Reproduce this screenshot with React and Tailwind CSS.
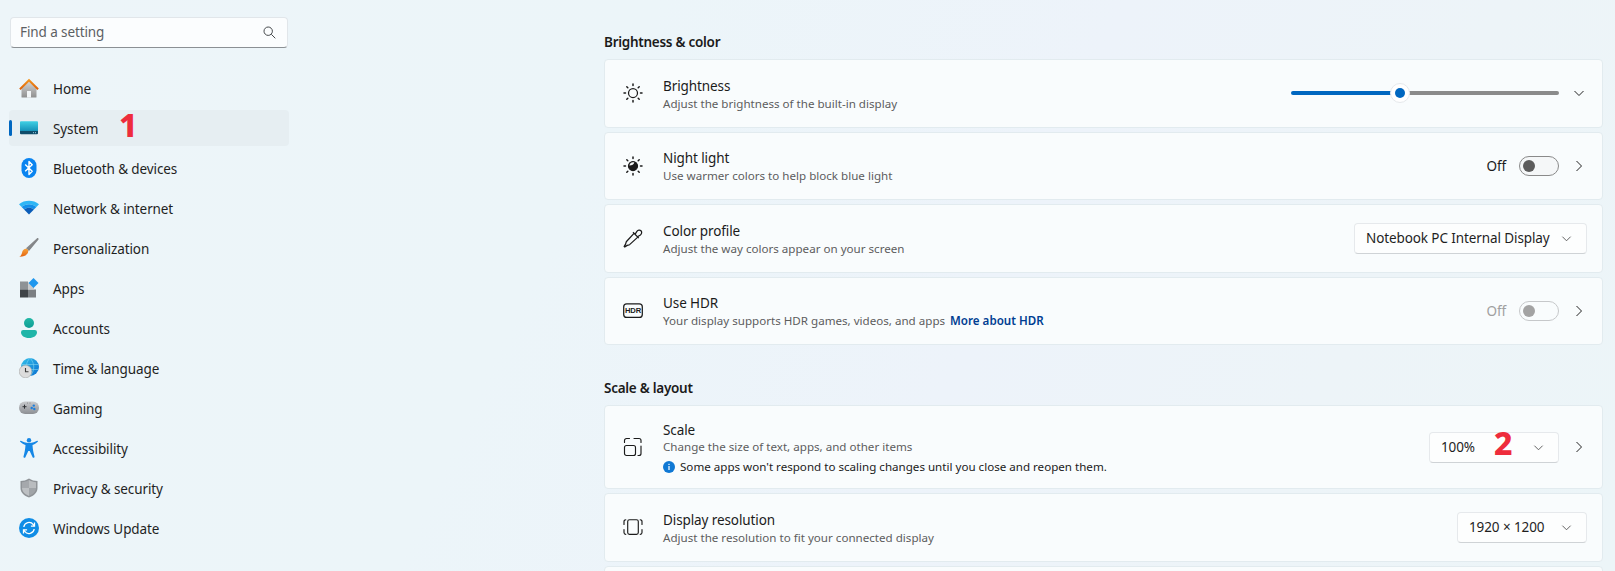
import React from "react";

const Grad = ({ id, a, b, x2 = 0, y2 = 1 }) => (
  <linearGradient id={id} x1="0" y1="0" x2={x2} y2={y2}>
    <stop offset="0" stopColor={a} />
    <stop offset="1" stopColor={b} />
  </linearGradient>
);

const HomeIcon = () => (
  <svg width="20" height="20" viewBox="0 0 20 20">
    <defs>
      <Grad id="homeBody" a="#d4d4d4" b="#8f8f8f" />
      <Grad id="homeRoof" a="#f59a22" b="#dc5f08" />
    </defs>
    <path d="M2.500 9.500 10 3.500l7.500 6V19a.6.6 0 0 1-.6.6H3.100a.6.6 0 0 1-.6-.6Z" fill="url(#homeBody)" />
    <rect x="8" y="13" width="4" height="6.600" fill="#f2f5f7" />
    <path d="M.2 10.600 10 .8l9.800 9.800-1.400 1.400L10 3.800 1.600 12Z" fill="url(#homeRoof)" />
  </svg>
);
const SystemIcon = () => (
  <svg width="20" height="20" viewBox="0 0 20 20">
    <defs>
      <Grad id="sysTop" a="#3fd0e4" b="#1591b8" />
    </defs>
    <path d="M1 4.400A1 1 0 0 1 2 3.300h16a1 1 0 0 1 1 1.100V13H1Z" fill="url(#sysTop)" />
    <path d="M1 13h18v2.200a1 1 0 0 1-1 1H2a1 1 0 0 1-1-1Z" fill="#0f4c6a" />
    <rect x="14" y="14.200" width="1" height="1" fill="#9fd3e6" />
    <rect x="16" y="14.200" width="1" height="1" fill="#9fd3e6" />
  </svg>
);
const BluetoothIcon = () => (
  <svg width="20" height="20" viewBox="0 0 20 20">
    <rect x="2.500" y="0" width="15" height="20" rx="7.500" fill="#0a84f0" />
    <path d="m6.200 6.600 7 6.600L10 16.500v-13l3.200 3.200-7 6.600" fill="none" stroke="#fff" strokeWidth="1.400" strokeLinejoin="round" />
  </svg>
);
const WifiIcon = () => (
  <svg width="20" height="20" viewBox="0 0 20 20">
    <path d="M0 6.200C5.500 1.600 14.500 1.600 20 6.200l-2.600 2.700C13 5.400 7 5.400 2.600 8.900Z" fill="#2fb6f5" />
    <path d="M2.600 8.900C7 5.400 13 5.400 17.400 8.900l-2.500 2.600C12 9.300 8 9.300 5.100 11.500Z" fill="#1390ea" />
    <path d="M5.100 11.500C8 9.300 12 9.300 14.900 11.500L10 16.400Z" fill="#0a5cb8" />
  </svg>
);
const BrushIcon = () => (
  <svg width="20" height="20" viewBox="0 0 20 20">
    <defs>
      <Grad id="brushH" a="#9a9a9a" b="#6f7378" x2={1} />
      <Grad id="brushT" a="#f7a33b" b="#e4640f" />
    </defs>
    <path d="M19.200.2c.5.4.5 1 .1 1.500L10 13l-3-2.800L17.800.4c.4-.4 1-.5 1.400-.2Z" fill="url(#brushH)" />
    <path d="M6.400 10.700c1.600-.4 3 .9 2.900 2.600-.2 3.200-4 5.700-9 5.500 2.300-1.400 2.400-3 3-5 .4-1.500 1.300-2.700 3.100-3.100Z" fill="url(#brushT)" />
  </svg>
);
const AppsIcon = () => (
  <svg width="20" height="20" viewBox="0 0 20 20">
    <rect x="1" y="3.500" width="8" height="8" fill="#8e9296" />
    <rect x="1" y="11.500" width="8" height="8" fill="#3f4347" />
    <rect x="9" y="11.500" width="8" height="8" fill="#7b7f83" />
    <rect x="9" y="4.500" width="6" height="7" fill="#c8cacc" />
    <path d="M14.500 0 19.500 5l-5 5-5-5Z" fill="#1f97ee" />
  </svg>
);
const AccountIcon = () => (
  <svg width="20" height="20" viewBox="0 0 20 20">
    <defs>
      <Grad id="acc" a="#22b8a6" b="#0f9d95" />
    </defs>
    <circle cx="10" cy="5" r="5" fill="url(#acc)" />
    <path d="M2 14.200A2.200 2.200 0 0 1 4.200 12h11.600a2.200 2.200 0 0 1 2.200 2.200c0 3.300-3.300 5.800-8 5.800s-8-2.500-8-5.800Z" fill="#1fb5a8" />
  </svg>
);
const TimeIcon = () => (
  <svg width="20" height="20" viewBox="0 0 20 20">
    <defs>
      <Grad id="globe" a="#33c1ea" b="#0a6fd0" x2={1} />
    </defs>
    <circle cx="11" cy="9" r="9" fill="url(#globe)" />
    <path d="M2.500 6.500h17M2.500 11.500h17M11 0c-5 5-5 13 0 18M11 0c5 5 5 13 0 18" stroke="#7fd5f2" strokeWidth="0.6" fill="none" />
    <circle cx="6.500" cy="13.500" r="6.300" fill="#dcdcdc" stroke="#a7a7a7" strokeWidth="0.6" />
    <path d="M6.500 10v3.800h3" fill="none" stroke="#3c3c3c" strokeWidth="1.100" />
  </svg>
);
const GamingIcon = () => (
  <svg width="20" height="20" viewBox="0 0 20 20">
    <defs>
      <Grad id="pad" a="#c8cacd" b="#8c8f94" />
    </defs>
    <rect x="0" y="3.500" width="20" height="12.500" rx="6" fill="url(#pad)" />
    <path d="M3.500 8.700h4M5.500 6.700v4" stroke="#2f3236" strokeWidth="1" />
    <circle cx="14.800" cy="7.600" r="1.200" fill="#1c7fdc" />
    <circle cx="12.700" cy="10" r="1.200" fill="#1c7fdc" />
    <circle cx="15.300" cy="11" r="1.200" fill="#1c7fdc" />
    <circle cx="8.500" cy="5" r="0.400" fill="#444" />
    <circle cx="11" cy="5" r="0.400" fill="#444" />
  </svg>
);
const AccessIcon = () => (
  <svg width="20" height="20" viewBox="0 0 20 20">
    <circle cx="10" cy="2.200" r="2.200" fill="#1587e6" />
    <path d="M1.200 3.700c-.4-.4 0-1.200.7-.9 2 1 4.500 2.200 8.100 2.200s6.100-1.200 8.100-2.200c.7-.3 1.100.5.700.9-1.500 1.400-3.600 2.700-5.300 3.200.2 4 1 8 2 11.500.3 1.200-1.300 1.900-1.900.8L10.700 13H9.300L6.400 19.300c-.6 1.100-2.200.4-1.900-.8 1-3.500 1.800-7.500 2-11.500-1.700-.5-3.800-1.800-5.300-3.300Z" fill="#1587e6" />
  </svg>
);
const ShieldIcon = () => (
  <svg width="20" height="20" viewBox="0 0 20 20">
    <path d="M10 .5c2.500 1.700 5.500 2.500 8.500 2.500v7c0 4.500-3.500 7.700-8.500 9.500C5 17.700 1.500 14.500 1.500 10V3C4.500 3 7.500 2.200 10 .5Z" fill="#8f9397" />
    <path d="M10 2c2.200 1.400 4.700 2.100 7 2.300V10H10Z" fill="#b9bcbf" />
    <path d="M10 2C7.800 3.400 5.300 4.100 3 4.300V10h7Z" fill="#a5a8ac" />
    <path d="M3 10h7v8C6 16.300 3 13.800 3 10Z" fill="#bdc0c3" />
    <path d="M17 10h-7v8c4-1.700 7-4.200 7-8Z" fill="#a0a4a8" />
  </svg>
);
const UpdateIcon = () => (
  <svg width="20" height="20" viewBox="0 0 20 20">
    <circle cx="10" cy="10" r="10" fill="#108de6" />
    <path d="M4.800 9A5.300 5.300 0 0 1 14.300 6.600L15.300 8" fill="none" stroke="#fff" strokeWidth="1.300" />
    <path d="M15.500 4.600V8.200h-3.600" fill="none" stroke="#fff" strokeWidth="1.300" />
    <path d="M15.200 11A5.300 5.300 0 0 1 5.700 13.400L4.700 12" fill="none" stroke="#fff" strokeWidth="1.300" />
    <path d="M4.500 15.400V11.800h3.600" fill="none" stroke="#fff" strokeWidth="1.300" />
  </svg>
);

const line = { fill: "none", stroke: "#1b1b1b", strokeWidth: 1.25 };
const rays = "M10 1v1.500M10 17.500V19M1 10h1.500M17.500 10H19M3.800 3.800l1 1M15.200 15.200l1 1M3.800 16.200l1-1M15.200 4.800l1-1";

const SunIcon = () => (
  <svg width="20" height="20" viewBox="0 0 20 20" {...line}>
    <circle cx="10" cy="10" r="4.500" />
    <path d={rays} strokeLinecap="round" strokeWidth="1.500" />
  </svg>
);
const NightIcon = () => (
  <svg width="20" height="20" viewBox="0 0 20 20" {...line}>
    <circle cx="10" cy="10" r="4.500" fill="#1b1b1b" />
    <path d="M6.400 9.600A3.800 3.800 0 0 1 10 6.200c.6 0 1 .1 1.300.3-.4 1.700-2.300 3-4.900 3.100Z" fill="#f4f6f7" stroke="none" />
    <path d={rays} strokeLinecap="round" strokeWidth="1.500" />
  </svg>
);
const DropperIcon = () => (
  <svg width="20" height="20" viewBox="0 0 20 20" {...line}>
    <path d="M11 5.300 3.500 13.500c-.6.700-.5 1.500-.8 2.400L1.200 18.300l.6.600 2.400-1.500c.9-.3 1.700-.2 2.400-.8l8.200-7.500" />
    <path d="m10 4.300 5.800 5.800M12 6.300l1.900-2.900c1-1.400 3-1.700 4.100-.6s.8 3.100-.6 4.100l-2.900 1.900" />
  </svg>
);
const HdrIcon = () => (
  <svg width="20" height="20" viewBox="0 0 20 20">
    <rect x="0.700" y="2.800" width="18.600" height="13.600" rx="3" fill="none" stroke="#1b1b1b" strokeWidth="1.250" />
    <text x="10" y="12.300" textAnchor="middle" fontSize="7.600" fontWeight="700" fill="#1b1b1b" style={{ fontFamily: '"Liberation Sans", sans-serif' }}>HDR</text>
  </svg>
);
const ScaleIcon = () => (
  <svg width="20" height="20" viewBox="0 0 20 20" {...line} strokeWidth="1.150">
    <rect x="1.500" y="8.500" width="11" height="10" rx="2" />
    <path d="M1.500 5.500V3.500a2 2 0 0 1 2-2h3M11 1.500h5a2 2 0 0 1 2 2v2M18 9v7.500a2 2 0 0 1-2 2h-1" strokeLinecap="round" />
  </svg>
);
const ResIcon = () => (
  <svg width="20" height="20" viewBox="0 0 20 20" {...line} strokeWidth="1.150">
    <rect x="4.700" y="2.700" width="10.600" height="14.600" rx="1.800" />
    <path d="M2.800 2.700A1.800 1.800 0 0 0 1 4.500v3M2.800 17.300A1.800 1.800 0 0 1 1 15.500v-3M17.200 2.700A1.800 1.800 0 0 1 19 4.500v3M17.200 17.300a1.800 1.800 0 0 0 1.800-1.800v-3" strokeLinecap="round" />
  </svg>
);

const ChevronDown = ({ size = 12, color = "#444" }) => (
  <svg width={size} height={size} viewBox="0 0 12 12" fill="none" stroke={color} strokeWidth="1">
    <path d="m1.500 4 4.500 4.500L10.500 4" />
  </svg>
);
const ChevronRight = () => (
  <svg width="12" height="12" viewBox="0 0 12 12" fill="none" stroke="#222" strokeWidth="1">
    <path d="m3.500 1 5 5-5 5" />
  </svg>
);

const navItems = [
  ["Home", HomeIcon],
  ["System", SystemIcon],
  ["Bluetooth & devices", BluetoothIcon],
  ["Network & internet", WifiIcon],
  ["Personalization", BrushIcon],
  ["Apps", AppsIcon],
  ["Accounts", AccountIcon],
  ["Time & language", TimeIcon],
  ["Gaming", GamingIcon],
  ["Accessibility", AccessIcon],
  ["Privacy & security", ShieldIcon],
  ["Windows Update", UpdateIcon],
];

const Toggle = ({ disabled }) => (
  <div className={`flex h-5 w-10 items-center rounded-full border pl-[3px] ${disabled ? "border-[#c6c8ca]" : "border-[#8a8a8a] bg-[#f5f7f8]"}`}>
    <div className={`h-3 w-3 rounded-full ${disabled ? "bg-[#a3a3a3]" : "bg-[#5c5c5c]"}`} />
  </div>
);

const Dropdown = ({ width, children }) => (
  <div className={`flex h-[31px] items-center justify-between rounded-[4px] border border-[#e6e9ec] border-b-[#cfd3d6] bg-[#fdfefe] pl-[11px] pr-[14px] text-[#1f1f1f] ${width}`}>
    <span>{children}</span>
    <ChevronDown size={11} color="#555" />
  </div>
);

const Card = ({ icon: Icon, title, sub, height = "h-[68.5px]", children, extra }) => (
  <div className={`flex shrink-0 items-center rounded-[4px] border border-[#e2ebef] bg-[#f9fcfd] pl-[18px] pr-[15px] ${height}`}>
    <div className="mr-5 w-5 shrink-0">
      <Icon />
    </div>
    <div className={`flex-1 ${extra ? "pt-px" : "pt-[2px]"}`}>
      <div className="leading-[19px] text-[#1b1b1b]">{title}</div>
      <div className={`text-[11.6px] leading-[16px] tracking-normal text-[#5d5d5d] ${extra ? "mt-[-1px]" : ""}`}>{sub}</div>
      {extra}
    </div>
    <div className="flex items-center">{children}</div>
  </div>
);

export default function App() {
  return (
    <div
      className="relative flex h-[571px] w-[1615px] overflow-hidden bg-[linear-gradient(115deg,#edf5f9_0%,#ecf5f9_35%,#edf3fa_60%,#edf4f8_80%,#ecf5f8_100%)] text-[13.5px] tracking-[-0.1px] text-[#1b1b1b]"
      style={{ fontFamily: '"Noto Sans", sans-serif' }}
    >
      <aside className="w-[298px] shrink-0 pl-[9px] pr-[9px] pt-[17px]">
        <div className="mx-px flex h-[31px] items-center justify-between rounded-[4px] border border-[#e1e6ea] border-b-[#8b9094] bg-[#fbfdfe] pl-[9px] pr-[11px] text-[#5c6063]">
          <span>Find a setting</span>
          <svg width="13" height="13" viewBox="0 0 13 13" fill="none" stroke="#44484b" strokeWidth="1">
            <circle cx="5.200" cy="5.200" r="4.200" />
            <path d="m8.300 8.300 4 4" />
          </svg>
        </div>
        <nav className="mt-[22px] flex flex-col gap-1">
          {navItems.map(([label, Icon]) => (
            <div
              key={label}
              className={`relative flex h-9 items-center rounded-[4px] pl-[10px] ${label === "System" ? "bg-[#e6eef2]" : ""}`}
            >
              {label === "System" && (
                <div className="absolute left-0 top-[10px] h-4 w-[3px] rounded-full bg-[#0067c0]" />
              )}
              <div className="mr-[14px] w-5 shrink-0">
                <Icon />
              </div>
              <span className="pt-[2px] text-[#1f1f1f]">{label}</span>
              {label === "System" && (
                <span className="absolute left-[110px] top-[-5px] text-[32px] font-extrabold leading-[40px] tracking-normal text-[#ee2c3c]">1</span>
              )}
            </div>
          ))}
        </nav>
      </aside>
      <main className="flex h-[571px] flex-1 flex-col overflow-hidden pl-[306px] pr-3 pt-[32px]">
        <h2 className="mb-[7px] text-[13.5px] font-semibold leading-5 tracking-[-0.27px] text-[#1b1b1b]">Brightness &amp; color</h2>
        <div className="flex flex-col gap-1">
          <Card icon={SunIcon} title="Brightness" sub="Adjust the brightness of the built-in display">
            <div className="relative mr-[14px] flex h-5 w-[268px] items-center">
              <div className="h-1 w-[109px] rounded-l-full bg-[#0067c0]" />
              <div className="h-1 flex-1 rounded-r-full bg-[#8b8b8b]" />
              <div className="absolute left-[99px] top-0 flex h-5 w-5 items-center justify-center rounded-full border border-[#e6e9ec] bg-white">
                <div className="h-[10px] w-[10px] rounded-full bg-[#0067c0]" />
              </div>
            </div>
            <div className="mr-[2px]">
              <ChevronDown size={12} color="#222" />
            </div>
          </Card>
          <Card icon={NightIcon} title="Night light" sub="Use warmer colors to help block blue light">
            <span className="mr-[13px] text-[#1b1b1b]">Off</span>
            <Toggle />
            <div className="ml-[14px] mr-[2px]">
              <ChevronRight />
            </div>
          </Card>
          <Card icon={DropperIcon} title="Color profile" sub="Adjust the way colors appear on your screen">
            <Dropdown width="w-[233px]">Notebook PC Internal Display</Dropdown>
          </Card>
          <Card
            icon={HdrIcon}
            title="Use HDR"
            sub={
              <>
                Your display supports HDR games, videos, and apps
                <span className="ml-[5px] font-semibold text-[#003e92]">More about HDR</span>
              </>
            }
          >
            <span className="mr-[13px] text-[#a0a0a0]">Off</span>
            <Toggle disabled />
            <div className="ml-[14px] mr-[2px]">
              <ChevronRight />
            </div>
          </Card>
        </div>
        <h2 className="mb-[7px] mt-[33px] text-[13.5px] font-semibold leading-5 tracking-[-0.27px] text-[#1b1b1b]">Scale &amp; layout</h2>
        <div className="flex flex-col gap-1">
          <Card
            icon={ScaleIcon}
            title="Scale"
            height="h-[84px]"
            sub="Change the size of text, apps, and other items"
            extra={
              <div className="mt-1 flex items-center text-[11.6px] leading-[16px] tracking-normal text-[#1b1b1b]">
                <svg className="mr-[5px]" width="12" height="12" viewBox="0 0 12 12">
                  <circle cx="6" cy="6" r="6" fill="#0f78d4" />
                  <rect x="5.400" y="5" width="1.200" height="4" fill="#fff" />
                  <rect x="5.400" y="2.800" width="1.200" height="1.200" fill="#fff" />
                </svg>
                Some apps won&apos;t respond to scaling changes until you close and reopen them.
              </div>
            }
          >
            <div className="relative">
              <Dropdown width="w-[130px]">100%</Dropdown>
              <span className="absolute left-[65px] top-[-9px] text-[32px] font-extrabold leading-[40px] tracking-normal text-[#ee2c3c]">2</span>
            </div>
            <div className="ml-[14px] mr-[2px]">
              <ChevronRight />
            </div>
          </Card>
          <Card icon={ResIcon} title="Display resolution" sub="Adjust the resolution to fit your connected display">
            <Dropdown width="w-[130px]">1920 × 1200</Dropdown>
          </Card>
          <div className="h-[68.5px] shrink-0 rounded-[4px] border border-[#e2ebef] bg-[#f9fcfd]" />
        </div>
      </main>
    </div>
  );
}
